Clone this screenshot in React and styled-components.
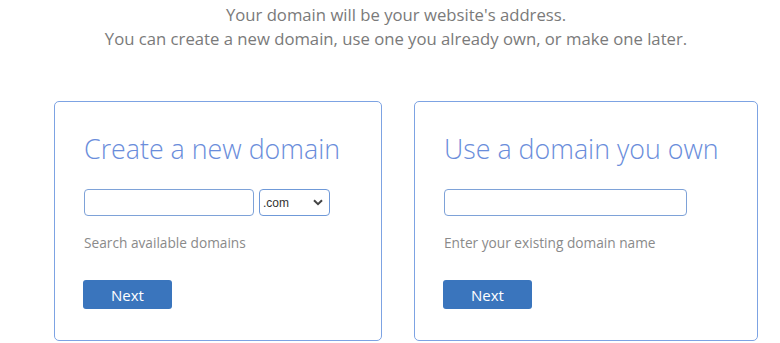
import React from "react";
import styled, { createGlobalStyle } from "styled-components";

const GlobalStyle = createGlobalStyle`
  body {
    margin: 0;
    background: #fff;
    font-family: "Open Sans", "Liberation Sans", sans-serif;
  }
`;

const Page = styled.div`
  width: 780px;
  height: 343px;
  overflow: hidden;
`;

const Intro = styled.div`
  padding: 3px 0 0 12px;
  text-align: center;
  font-size: 16.7px;
  line-height: 24px;
  color: #7a7a7a;
`;

const Cards = styled.div`
  display: flex;
  gap: 32px;
  margin: 50px 0 0 54px;
`;

const Card = styled.div`
  box-sizing: border-box;
  width: ${(props) => props.width}px;
  height: 240px;
  border: 1px solid #7da3e3;
  border-radius: 5px;
  padding: 29px 29px 0;
`;

const Title = styled.h2`
  margin: 0;
  font-size: 26.8px;
  line-height: 36px;
  font-weight: 300;
  white-space: nowrap;
  color: #6a8ddb;
`;

const Row = styled.div`
  display: flex;
  gap: 5px;
  margin-top: 22px;
`;

const TextInput = styled.input`
  box-sizing: border-box;
  width: ${(props) => props.width}px;
  height: 27px;
  border: 1px solid #7ea2d8;
  border-radius: 4px;
  padding: 0 6px;
  outline: none;
`;

const SelectWrap = styled.div`
  position: relative;
  width: 71px;
  height: 27px;
`;

const Select = styled.select`
  box-sizing: border-box;
  width: 100%;
  height: 100%;
  appearance: none;
  -webkit-appearance: none;
  border: 1px solid #6f99d8;
  border-radius: 4px;
  background: #fff;
  padding: 0 0 0 3px;
  font-family: "Liberation Sans", Arial, sans-serif;
  font-size: 12px;
  color: #333;
  outline: none;
`;

const Chevron = styled.svg`
  position: absolute;
  right: 7px;
  top: 10px;
  pointer-events: none;
`;

const Hint = styled.p`
  margin: 17px 0 0;
  font-size: 13.7px;
  line-height: 20px;
  color: #8a8a8a;
`;

const NextButton = styled.button`
  display: block;
  margin: 27px 0 0 -1px;
  width: 89px;
  height: 29px;
  border: none;
  border-radius: 3px;
  background: #3a75bd;
  color: #fff;
  font-family: "Open Sans", "Liberation Sans", sans-serif;
  font-size: 15px;
  cursor: pointer;
`;

const App = () => {
  return (
    <Page>
      <GlobalStyle />
      <Intro>
        Your domain will be your website's address.
        <br />
        You can create a new domain, use one you already own, or make one later.
      </Intro>
      <Cards>
        <Card width={328}>
          <Title>Create a new domain</Title>
          <Row>
            <TextInput width={170} />
            <SelectWrap>
              <Select defaultValue=".com">
                <option>.com</option>
                <option>.net</option>
                <option>.org</option>
              </Select>
              <Chevron width="10" height="7" viewBox="0 0 10 7">
                <path d="M1 1.2L5 5.2L9 1.2" fill="none" stroke="#444" strokeWidth="2" />
              </Chevron>
            </SelectWrap>
          </Row>
          <Hint>Search available domains</Hint>
          <NextButton>Next</NextButton>
        </Card>
        <Card width={344}>
          <Title>Use a domain you own</Title>
          <Row>
            <TextInput width={243} />
          </Row>
          <Hint>Enter your existing domain name</Hint>
          <NextButton>Next</NextButton>
        </Card>
      </Cards>
    </Page>
  );
};

export default App;
